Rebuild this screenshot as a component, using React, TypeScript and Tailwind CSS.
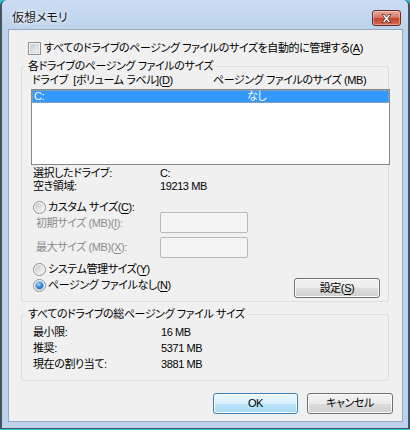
import type { ReactNode } from 'react'

function U({ children }: { children: ReactNode }) {
  return <span className="underline underline-offset-[2px] decoration-[1px]">{children}</span>
}

function CheckBox() {
  return (
    <span className="w-[13px] h-[13px] shrink-0 flex border border-[#8e8f8f] bg-[#f4f4f4] p-[1px]">
      <span className="flex-1 border border-[#d4d7db] bg-gradient-to-br from-[#c4c8ce] to-[#f4f5f6]" />
    </span>
  )
}

function Radio({ checked }: { checked?: boolean }) {
  return (
    <span className="w-[13px] h-[13px] shrink-0 rounded-full border border-[#8e8f8f] bg-[#f6f6f6] flex items-center justify-center">
      {checked ? (
        <span className="w-[7px] h-[7px] rounded-full bg-[radial-gradient(circle_at_40%_35%,#a8dcff_0%,#3a89d6_45%,#13457f_100%)] shadow-[0_0_0_1px_#8fc0ea]" />
      ) : (
        <span className="w-[9px] h-[9px] rounded-full bg-gradient-to-br from-[#c6cacf] to-[#f7f7f7]" />
      )}
    </span>
  )
}

function Btn({ children, primary, className = '' }: { children: ReactNode; primary?: boolean; className?: string }) {
  return (
    <button
      className={`${className} shrink-0 rounded-[3px] border flex items-center justify-center leading-[13px] shadow-[inset_0_0_0_1px_#fcfcfc] ${
        primary
          ? 'border-[#3c7fb1] bg-[linear-gradient(#eaf6fd_0%,#d9f0fc_50%,#bee6fd_50%,#a7d9f5_100%)]'
          : 'border-[#707070] bg-[linear-gradient(#f2f2f2_0%,#ebebeb_50%,#dddddd_50%,#cfcfcf_100%)]'
      }`}
    >
      {children}
    </button>
  )
}

function DisabledInput() {
  return <div className="w-[88px] h-[21px] shrink-0 rounded-[2px] border border-[#b9b9b9] bg-[#f4f4f4]" />
}

export default function App() {
  return (
    <div className="w-[410px] h-[430px] flex flex-col bg-[#2fc4d6] text-[11px] tracking-[-0.4px] text-black font-['Liberation_Sans','Noto_Sans_CJK_JP',sans-serif] [font-feature-settings:'palt']">
      <div className="h-[429px] flex flex-col bg-[#bdd3ec] border-l-2 border-r-2 border-b border-[#45525f] rounded-t-[6px]">
        {/* title bar */}
        <div className="h-[29px] shrink-0 flex items-start rounded-t-[6px] bg-gradient-to-b from-[#c9dcf2] to-[#bdd3ec]">
          <span className="pl-[10px] pt-[10px] leading-[16px] text-[12px] tracking-normal text-[#151515] [text-shadow:0_0_8px_rgba(255,255,255,0.95),0_0_3px_#fff]">
            仮想メモリ
          </span>
          <button className="ml-auto mr-[7px] mt-[10px] w-[29px] h-[16px] rounded-[3px] border border-[#6b2a22] bg-[linear-gradient(#eba99c_0%,#d8786a_45%,#c4442e_55%,#d66c50_100%)] shadow-[inset_0_0_0_1px_rgba(255,255,255,0.35)] flex items-center justify-center">
            <svg width="11" height="9" viewBox="0 0 11 9">
              <path
                d="M1 0.5h2.6L5.5 3 7.4 0.5H10L7 4.5 10 8.5H7.4L5.5 6 3.6 8.5H1L4 4.5Z"
                fill="#fff"
                stroke="#43302d"
                strokeWidth="0.8"
                strokeLinejoin="round"
              />
            </svg>
          </button>
        </div>

        {/* client area */}
        <div className="ml-[6px] w-[395px] h-[393px] shrink-0 flex flex-col border border-[#97a8bc] bg-[#f0f0f0] pl-[12px]">
          <div className="mt-[12px] ml-[7px] h-[13px] flex items-center gap-[3px] leading-[13px] whitespace-nowrap">
            <CheckBox />
            <span>すべてのドライブのページング ファイルのサイズを自動的に管理する(<U>A</U>)</span>
          </div>

          {/* per-drive group */}
          <fieldset className="mt-[5px] w-[368px] min-w-0 border border-[#d5dfe5] rounded-[3px]">
            <legend className="ml-[3px] px-[3px] leading-[13px]">各ドライブのページング ファイルのサイズ</legend>
            <div className="pl-[9px] pr-[8px] pb-[3px] flex flex-col">
              <div className="mt-[1px] h-[13px] flex leading-[13px] whitespace-nowrap">
                <span className="ml-[1px] w-[181px]">
                  ドライブ&nbsp; [ボリューム ラベル](<U>D</U>)
                </span>
                <span>ページング ファイルのサイズ (MB)</span>
              </div>
              <div className="mt-[2px] w-[359px] shrink-0 h-[76px] border border-[#828790] bg-white">
                <div className="h-[13px] flex bg-[#3399ff] text-white border border-dotted border-[#c9a47c] pl-[1px] leading-[11px]">
                  <span className="w-[213px]">C:</span>
                  <span>なし</span>
                </div>
              </div>

              <div className="mt-[2px] ml-[2px] flex flex-col leading-[13px]">
                <div className="h-[13px] flex">
                  <span className="w-[127px]">選択したドライブ:</span>
                  <span>C:</span>
                </div>
                <div className="h-[13px] flex">
                  <span className="w-[127px]">空き領域:</span>
                  <span>19213 MB</span>
                </div>
              </div>

              <div className="mt-[8px] ml-[2px] h-[13px] flex items-center gap-[2px] leading-[13px]">
                <Radio />
                <span>カスタム サイズ(<U>C</U>):</span>
              </div>
              <div className="-mt-[2px] h-[21px] flex items-center text-[#8b8b8b] leading-[13px]">
                <span className="ml-[5px] w-[124px] pt-[2px]">初期サイズ (MB)(<U>I</U>):</span>
                <DisabledInput />
              </div>
              <div className="mt-[4px] h-[21px] flex items-center text-[#8b8b8b] leading-[13px]">
                <span className="ml-[5px] w-[124px]">最大サイズ (MB)(<U>X</U>):</span>
                <DisabledInput />
              </div>

              <div className="mt-[5px] ml-[2px] h-[13px] flex items-center gap-[2px] leading-[13px]">
                <Radio />
                <span>システム管理サイズ(<U>Y</U>)</span>
              </div>
              <div className="mt-[2px] h-[20px] flex items-start">
                <div className="mt-[1px] ml-[2px] h-[13px] flex items-center gap-[2px] leading-[13px]">
                  <Radio checked />
                  <span>ページング ファイルなし(<U>N</U>)</span>
                </div>
                <Btn className="ml-auto w-[86px] h-[20px]">
                  設定(<U>S</U>)
                </Btn>
              </div>
            </div>
          </fieldset>

          {/* totals group */}
          <fieldset className="mt-[6px] w-[368px] min-w-0 border border-[#d5dfe5] rounded-[3px]">
            <legend className="ml-[3px] px-[3px] leading-[13px]">すべてのドライブの総ページング ファイル サイズ</legend>
            <div className="pl-[11px] pt-[3px] pb-[8px] flex flex-col leading-[16px]">
              <div className="h-[16px] flex">
                <span className="w-[128px]">最小限:</span>
                <span>16 MB</span>
              </div>
              <div className="h-[16px] flex">
                <span className="w-[128px]">推奨:</span>
                <span>5371 MB</span>
              </div>
              <div className="h-[16px] flex">
                <span className="w-[128px]">現在の割り当て:</span>
                <span>3881 MB</span>
              </div>
            </div>
          </fieldset>

          <div className="mt-[12px] mr-[9px] flex justify-end gap-[9px]">
            <Btn primary className="w-[85px] h-[21px]">
              OK
            </Btn>
            <Btn className="w-[86px] h-[21px]">キャンセル</Btn>
          </div>
        </div>
      </div>
    </div>
  )
}
